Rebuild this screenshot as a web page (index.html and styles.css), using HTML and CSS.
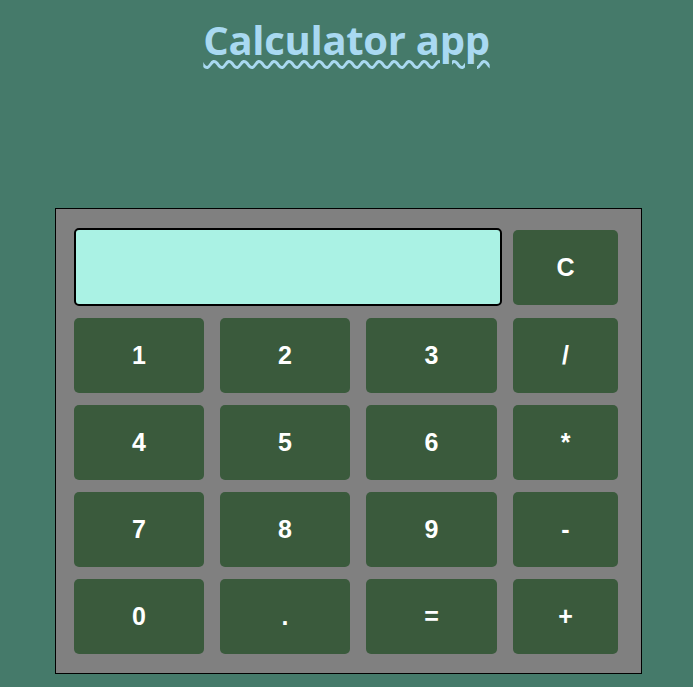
FILE: index.html
```html
<!DOCTYPE html>
<html>
<head>
<meta charset="utf-8">
<link rel="stylesheet" href="styles.css">
</head>
<body>
<h1 class="title">Calculator app</h1>
<div class="calc">
  <div class="display"></div>
  <button class="key">C</button>
  <button class="key">1</button>
  <button class="key">2</button>
  <button class="key">3</button>
  <button class="key">/</button>
  <button class="key">4</button>
  <button class="key">5</button>
  <button class="key">6</button>
  <button class="key">*</button>
  <button class="key">7</button>
  <button class="key">8</button>
  <button class="key">9</button>
  <button class="key">-</button>
  <button class="key">0</button>
  <button class="key">.</button>
  <button class="key">=</button>
  <button class="key">+</button>
</div>
</body>
</html>
```
FILE: styles.css
```css
html, body {
  background: #457a6a;
}
body {
  margin: 8px;
  font-family: "Liberation Sans", Arial, sans-serif;
}
.title {
  margin: 10px 0 0;
  height: 190px;
  text-align: center;
  font-family: "Open Sans", sans-serif;
  font-weight: 700;
  font-size: 40px;
  line-height: 44px;
  color: #a9d9f1;
  letter-spacing: -0.3px;
  text-decoration: underline wavy #a9d9f1;
  text-decoration-thickness: 2.5px;
  text-underline-offset: 5px;
}
.calc {
  margin-left: 47px;
  box-sizing: content-box;
  border: 1px solid #000;
  background: #808080;
  padding: 19px 0 19px 18px;
  display: grid;
  grid-template-columns: 130px 130px 131px 105px;
  grid-template-rows: 78px repeat(4, 75px);
  column-gap: 16px;
  row-gap: 12px;
  align-items: center;
  width: 567px;
}
.display {
  grid-column: 1 / span 3;
  width: 428px;
  height: 78px;
  box-sizing: border-box;
  background: #aaf2e4;
  border: 2px solid #000;
  border-radius: 5px;
}
.key {
  height: 75px;
  border: none;
  border-radius: 5px;
  background: #3a5a3c;
  color: #fff;
  font-family: "Liberation Sans", Arial, sans-serif;
  font-weight: 700;
  font-size: 25px;
  padding: 0;
}
```
